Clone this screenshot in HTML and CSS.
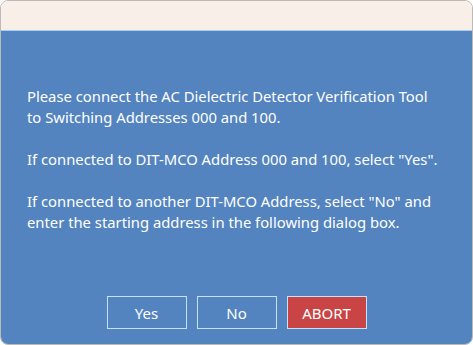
FILE: index.html
```html
<!DOCTYPE html>
<html>
<head>
<meta charset="utf-8">
<link rel="stylesheet" href="styles.css">
</head>
<body>
<div class="window">
  <div class="titlebar"></div>
  <div class="content">
    <div class="message">
      <p>Please connect the AC Dielectric Detector Verification Tool<br>to Switching Addresses 000 and 100.</p>
      <p>If connected to DIT-MCO Address 000 and 100, select "Yes".</p>
      <p>If connected to another DIT-MCO Address, select "No" and<br>enter the starting address in the following dialog box.</p>
    </div>
    <div class="buttons">
      <button class="btn">Yes</button>
      <button class="btn">No</button>
      <button class="btn abort">ABORT</button>
    </div>
  </div>
</div>
</body>
</html>
```
FILE: styles.css
```css
html, body {
  margin: 0;
  padding: 0;
  background: #ffffff;
}
.window {
  width: 473px;
  height: 345px;
  box-sizing: border-box;
  border: 1px solid #bdb9b5;
  border-radius: 8px;
  overflow: hidden;
  display: flex;
  flex-direction: column;
  font-family: "Noto Sans", "Open Sans", sans-serif;
}
.titlebar {
  height: 29px;
  background: #f7efe8;
  border-bottom: 1px solid #a9cdf0;
  flex: none;
}
.content {
  flex: 1;
  background: #5384c0;
  display: flex;
  flex-direction: column;
  padding: 55px 0 15px 26px;
}
.message {
  flex: 1;
  color: #ffffff;
  font-size: 14.8px;
  line-height: 21px;
}
.message p {
  margin: 0 0 21px 0;
}
.buttons {
  display: flex;
  justify-content: center;
  gap: 10px;
  margin-left: -26px;
}
.btn {
  width: 80px;
  height: 33px;
  box-sizing: border-box;
  background: #5384c0;
  border: 1px solid #c5e2fb;
  color: #ffffff;
  font-family: "Noto Sans", "Open Sans", sans-serif;
  font-size: 15px;
  padding: 0;
}
.btn.abort {
  background: #c94444;
}
```
